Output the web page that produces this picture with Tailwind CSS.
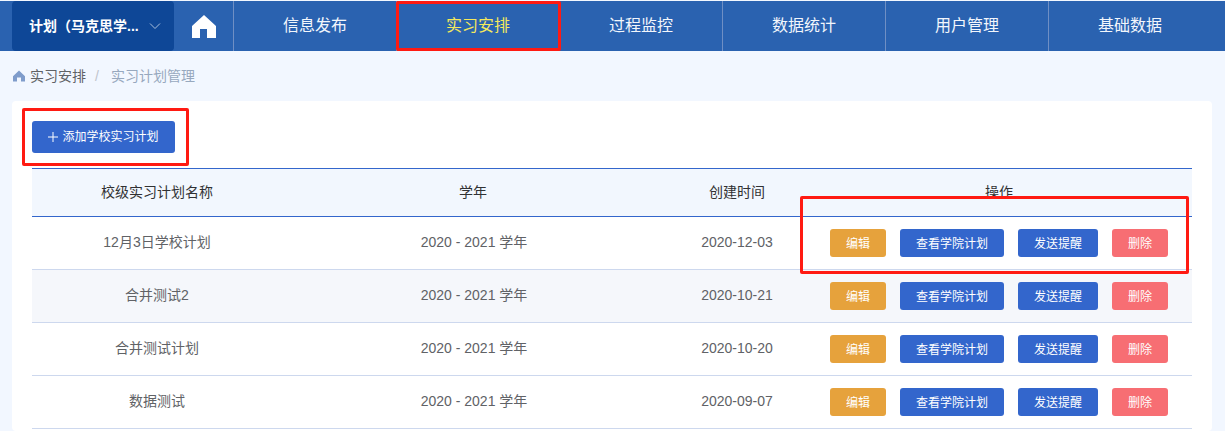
<!DOCTYPE html>
<html lang="zh-CN">
<head>
    <meta charset="UTF-8">
    <meta name="viewport" content="width=device-width, initial-scale=1.0">
    <title>实习计划管理</title>
    <script src="https://cdn.jsdelivr.net/npm/@tailwindcss/browser@4"></script>
</head>
<body class="relative h-[431px] overflow-hidden bg-[#f2f7ff] pt-px font-['Liberation_Sans','Noto_Sans_CJK_SC',sans-serif]">
    <!-- top nav -->
    <nav class="flex h-[50px] bg-[#2a62b0] pl-3 text-base text-[#f2f6fc]">
        <div class="flex h-[50px] w-[162px] items-center rounded bg-[#0e4797] pl-[17px] text-[14px] font-bold text-white">
            <span>计划（马克思学...</span>
            <svg class="ml-[10px] size-[12px]" viewBox="0 0 12 12" fill="none" stroke="#a9bfdc" stroke-width="1"><path d="M1 3.500l5 5 5-5"/></svg>
        </div>
        <div class="flex w-[59px] items-center justify-center">
            <svg class="mt-px ml-px size-[24px]" viewBox="0 0 24 24" fill="#fff"><path fill-rule="evenodd" d="M12 0L24 11V23H15V14H8V23H0V11Z"/></svg>
        </div>
        <div class="flex w-[163px] items-center justify-center border-l border-[#6f8fc4]">信息发布</div>
        <div class="flex w-[163px] items-center justify-center border-l border-[#6f8fc4] text-[#f4e85c]">实习安排</div>
        <div class="flex w-[163px] items-center justify-center border-l border-[#2a62b0]">过程监控</div>
        <div class="flex w-[163px] items-center justify-center border-l border-[#6f8fc4]">数据统计</div>
        <div class="flex w-[163px] items-center justify-center border-l border-[#6f8fc4]">用户管理</div>
        <div class="flex w-[163px] items-center justify-center border-l border-[#6f8fc4]">基础数据</div>
    </nav>

    <!-- breadcrumb -->
    <div class="flex h-[50px] items-center pl-[13px] text-[14px]">
        <svg class="mr-[5px] size-[12px]" viewBox="0 0 12 12" fill="#7f9ccb"><path fill-rule="evenodd" d="M6 .5L12 6.300V11.500H8V7.500H4V11.500H0V6.300Z"/></svg>
        <span class="text-[#606266]">实习安排</span>
        <span class="mr-3 ml-[9px] text-[#c0c4cc]">/</span>
        <span class="text-[#97a8be]">实习计划管理</span>
    </div>

    <!-- card -->
    <main class="ml-3 h-[330px] w-[1200px] rounded bg-white px-5 pt-5">
        <button class="flex h-8 w-[143px] items-center justify-center rounded-[3px] bg-[#3366cc] text-xs text-white">
            <svg class="mr-[4px] size-[10px]" viewBox="0 0 10 10" stroke="#fff" stroke-width="1"><path d="M5 0v10M0 5h10"/></svg>
            添加学校实习计划
        </button>
        <table class="mt-[15px] w-[1160px] table-fixed border-collapse text-center text-[14px] text-[#606266]">
            <colgroup>
                <col class="w-[248px]"><col class="w-[386px]"><col class="w-[140px]"><col class="w-[386px]">
            </colgroup>
            <thead class="bg-[#f2f7fe] text-[#303133]">
                <tr class="h-[48px] border-y border-[#3366cc]">
                    <th class="pl-[2px] font-normal">校级实习计划名称</th>
                    <th class="font-normal">学年</th>
                    <th class="pl-[2px] font-normal">创建时间</th>
                    <th class="font-normal">操作</th>
                </tr>
            </thead>
            <tbody>
                <tr class="h-[53px] border-b border-[#cdd8ee]">
                    <td class="pb-[2px] pl-[2px]">12月3日学校计划</td>
                    <td class="pb-[2px] pl-[2px]">2020 - 2021 学年</td>
                    <td class="pb-[2px] pl-[2px]">2020-12-03</td>
                    <td><div class="flex justify-center gap-[14px] text-xs text-white">
                        <button class="h-7 w-14 rounded-[3px] bg-[#e6a23c] pt-[2px]">编辑</button>
                        <button class="h-7 w-[104px] rounded-[3px] bg-[#3366cc] pt-[2px]">查看学院计划</button>
                        <button class="h-7 w-20 rounded-[3px] bg-[#3366cc] pt-[2px]">发送提醒</button>
                        <button class="h-7 w-14 rounded-[3px] bg-[#f76e73] pt-[2px]">删除</button>
                    </div></td>
                </tr>
                <tr class="h-[53px] border-b border-[#cdd8ee] bg-[#f5f7fb]">
                    <td class="pb-[2px] pl-[2px]">合并测试2</td>
                    <td class="pb-[2px] pl-[2px]">2020 - 2021 学年</td>
                    <td class="pb-[2px] pl-[2px]">2020-10-21</td>
                    <td><div class="flex justify-center gap-[14px] text-xs text-white">
                        <button class="h-7 w-14 rounded-[3px] bg-[#e6a23c] pt-[2px]">编辑</button>
                        <button class="h-7 w-[104px] rounded-[3px] bg-[#3366cc] pt-[2px]">查看学院计划</button>
                        <button class="h-7 w-20 rounded-[3px] bg-[#3366cc] pt-[2px]">发送提醒</button>
                        <button class="h-7 w-14 rounded-[3px] bg-[#f76e73] pt-[2px]">删除</button>
                    </div></td>
                </tr>
                <tr class="h-[53px] border-b border-[#cdd8ee]">
                    <td class="pb-[2px] pl-[2px]">合并测试计划</td>
                    <td class="pb-[2px] pl-[2px]">2020 - 2021 学年</td>
                    <td class="pb-[2px] pl-[2px]">2020-10-20</td>
                    <td><div class="flex justify-center gap-[14px] text-xs text-white">
                        <button class="h-7 w-14 rounded-[3px] bg-[#e6a23c] pt-[2px]">编辑</button>
                        <button class="h-7 w-[104px] rounded-[3px] bg-[#3366cc] pt-[2px]">查看学院计划</button>
                        <button class="h-7 w-20 rounded-[3px] bg-[#3366cc] pt-[2px]">发送提醒</button>
                        <button class="h-7 w-14 rounded-[3px] bg-[#f76e73] pt-[2px]">删除</button>
                    </div></td>
                </tr>
                <tr class="h-[53px] border-b border-[#cdd8ee]">
                    <td class="pb-[2px] pl-[2px]">数据测试</td>
                    <td class="pb-[2px] pl-[2px]">2020 - 2021 学年</td>
                    <td class="pb-[2px] pl-[2px]">2020-09-07</td>
                    <td><div class="flex justify-center gap-[14px] text-xs text-white">
                        <button class="h-7 w-14 rounded-[3px] bg-[#e6a23c] pt-[2px]">编辑</button>
                        <button class="h-7 w-[104px] rounded-[3px] bg-[#3366cc] pt-[2px]">查看学院计划</button>
                        <button class="h-7 w-20 rounded-[3px] bg-[#3366cc] pt-[2px]">发送提醒</button>
                        <button class="h-7 w-14 rounded-[3px] bg-[#f76e73] pt-[2px]">删除</button>
                    </div></td>
                </tr>
            </tbody>
        </table>
    </main>

    <!-- red annotation boxes drawn over the screenshot -->
    <div class="absolute top-px left-[396px] h-[50px] w-[165px] rounded-[2px] border-[3px] border-[#ff1a12]"></div>
    <div class="absolute top-[108px] left-[22px] h-[58px] w-[167px] rounded-[2px] border-[3px] border-[#ff1a12]"></div>
    <div class="absolute top-[196px] left-[800px] h-[78px] w-[389px] rounded-[2px] border-[3px] border-[#ff1a12]"></div>
</body>
</html>
